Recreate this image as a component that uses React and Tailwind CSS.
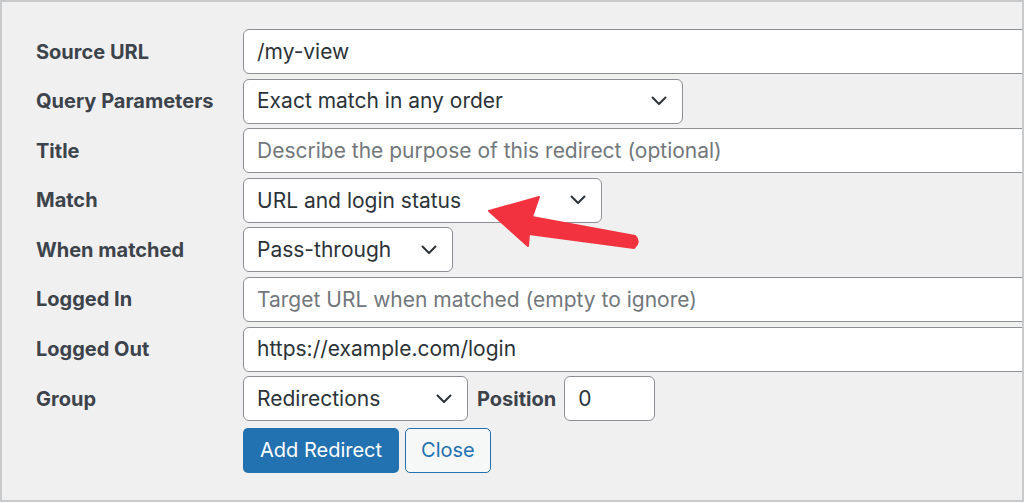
import React from "react";

const font = { fontFamily: "Inter, 'Liberation Sans', sans-serif" };

function Chevron() {
  return (
    <svg width="16" height="10" viewBox="0 0 16 10" className="absolute right-[15px] top-1/2 -translate-y-1/2">
      <path d="M1.5 1.5 L8 8 L14.5 1.5" fill="none" stroke="#2c3338" strokeWidth="2" strokeLinecap="round" strokeLinejoin="round" />
    </svg>
  );
}

function Input({ value, placeholder, w = "w-[800px]" }) {
  return (
    <div className={`h-[45px] ${w} shrink-0 rounded-[6px] border-[1.5px] border-[#8c8f94] bg-white flex items-center px-[13px] text-[21px] ${value ? "text-[#2c3338]" : "text-[#72777c]"}`}>
      {value || placeholder}
    </div>
  );
}

function Select({ value, w }) {
  return (
    <div className={`relative h-[45px] ${w} shrink-0 rounded-[6px] border-[1.5px] border-[#8c8f94] bg-white flex items-center px-[13px] text-[21px] text-[#2c3338]`}>
      {value}
      <Chevron />
    </div>
  );
}

function Row({ label, children }) {
  return (
    <div className="flex items-center h-[45px]">
      <div className="w-[207px] shrink-0 text-[20px] font-bold text-[#3c434a]">{label}</div>
      {children}
    </div>
  );
}

export default function App() {
  return (
    <div style={font} className="relative w-[1024px] h-[503px] bg-white">
      <div className="relative w-[1024px] h-[502px] border-2 border-[#c9cacc] bg-[#f0f0f1] overflow-hidden">
        <div className="flex flex-col gap-y-[4.6px] pl-[34px] pt-[27px]">
          <Row label="Source URL"><Input value="/my-view" /></Row>
          <Row label="Query Parameters"><Select value="Exact match in any order" w="w-[440px]" /></Row>
          <Row label="Title"><Input placeholder="Describe the purpose of this redirect (optional)" /></Row>
          <Row label="Match"><Select value="URL and login status" w="w-[359px]" /></Row>
          <Row label="When matched"><Select value="Pass-through" w="w-[210px]" /></Row>
          <Row label="Logged In"><Input placeholder="Target URL when matched (empty to ignore)" /></Row>
          <Row label="Logged Out"><Input value="https://example.com/login" /></Row>
          <Row label="Group">
            <div className="flex items-center">
              <Select value="Redirections" w="w-[225px]" />
              <span className="ml-[9px] mr-[8px] text-[20px] font-bold text-[#3c434a]">Position</span>
              <Input value="0" w="w-[91px]" />
            </div>
          </Row>
          <div className="flex items-center h-[45px] mt-[2px] pl-[207px] gap-[6px]">
            <div className="h-[45px] px-[17px] rounded-[5px] bg-[#2271b1] text-white text-[20px] flex items-center">Add Redirect</div>
            <div className="h-[45px] px-[15px] rounded-[5px] border-[1.5px] border-[#2271b1] bg-[#f6f7f7] text-[#2271b1] text-[20px] flex items-center">Close</div>
          </div>
        </div>
        <svg className="absolute left-0 top-0 pointer-events-none" width="1024" height="503" viewBox="0 0 1024 503">
          <path
            d="M487 209 L537 195 L530 215 L633 234 Q639 240 632 246 L527 232 L526 244 Z"
            fill="#f2333f"
            stroke="#f2333f"
            strokeWidth="2"
            strokeLinejoin="round"
          />
        </svg>
      </div>
    </div>
  );
}
